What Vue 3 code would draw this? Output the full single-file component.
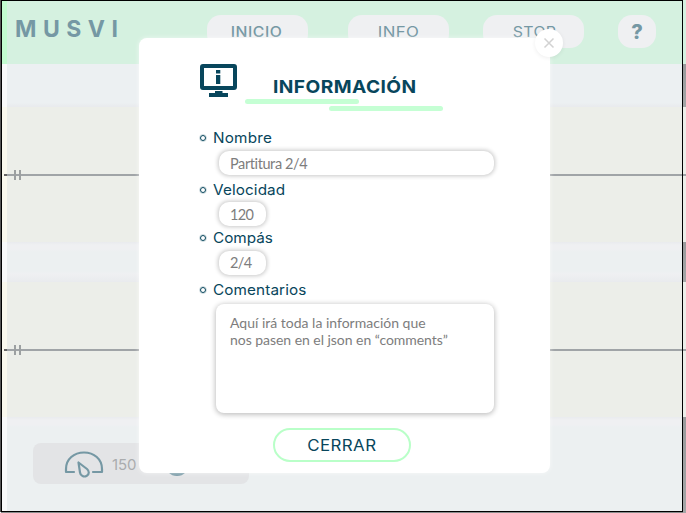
<script setup>
const nav = [
  { label: 'INICIO', cls: 'inicio' },
  { label: 'INFO', cls: 'info' },
  { label: 'STOP', cls: 'stop' },
]
const fields = [
  { label: 'Nombre', value: 'Partitura 2/4', cls: 'nombre' },
  { label: 'Velocidad', value: '120', cls: 'velocidad' },
  { label: 'Compás', value: '2/4', cls: 'compas' },
]
</script>

<template>
  <div class="screen">
    <header class="header">
      <h1 class="logo">MUSVI</h1>
      <nav class="nav">
        <button v-for="n in nav" :key="n.label" :class="['pill', n.cls]"><span>{{ n.label }}</span></button>
        <button class="pill help"><span>?</span></button>
      </nav>
    </header>
    <main class="score">
      <div class="gap first"></div>
      <section class="staff"><div class="line"></div><div class="bars"><i></i><i></i></div></section>
      <div class="gap middle"></div>
      <section class="staff"><div class="line"></div><div class="bars"><i></i><i></i></div></section>
    </main>
    <footer class="footer">
      <div class="tools">
        <svg class="gauge" width="42" height="30" viewBox="0 0 42 30" fill="none" stroke="#7598a4" stroke-width="2.2" stroke-linecap="round" stroke-linejoin="round">
          <path d="M11 23H3V20C3 10 11 3.5 21 3.5S39 10 39 20V23H30" />
          <path d="M15.5 13.5L17 23.5C17.5 27 21 28.4 23.8 26.8C26.6 25 26.2 22 24 20Z" />
        </svg>
        <span class="tempo">150</span>
        <span class="dot"></span>
      </div>
    </footer>
    <div class="edge left"><i class="e-head"></i><i class="e-gap1"></i><i class="e-staff"></i><i class="e-gap2"></i><i class="e-staff"></i></div>
    <div class="edge right"><i class="e-head"></i><i class="e-gap1"></i><i class="e-staff"></i><i class="e-gap2"></i><i class="e-staff"></i><i class="e-rest"></i></div>
    <div class="frame"></div>

    <div class="modal">
      <button class="close" aria-label="Cerrar">
        <svg width="12" height="12" viewBox="0 0 12 12" stroke="#d2d2d2" stroke-width="1.5"><path d="M1.5 1.5L10.5 10.5M10.5 1.5L1.5 10.5" /></svg>
      </button>
      <div class="title">
        <svg class="monitor" width="37" height="34" viewBox="0 0 37 34" fill="#08465c">
          <path fill-rule="evenodd" d="M3 0H34Q37 0 37 3V23Q37 26 34 26H3Q0 26 0 23V3Q0 0 3 0ZM4 4V22H33V4Z" />
          <path d="M16 6h4.3v3.4H16zM16 11h4.3v9H16zM15 27h7.5v2H28v4H9v-4h6z" />
        </svg>
        <div class="heading">
          <h2><span>INFORMACIÓN</span></h2>
          <div class="rule one"></div>
          <div class="rule two"></div>
        </div>
      </div>
      <div class="form">
        <div v-for="f in fields" :key="f.label" :class="['field', f.cls]">
          <div class="label"><i></i><span>{{ f.label }}</span></div>
          <div class="input"><span>{{ f.value }}</span></div>
        </div>
        <div class="field comentarios">
          <div class="label"><i></i><span>Comentarios</span></div>
          <div class="area"><p class="l1">Aquí irá toda la información que</p><p class="l2">nos pasen en el json en “comments”</p></div>
        </div>
      </div>
      <button class="cerrar"><span>CERRAR</span></button>
    </div>
  </div>
</template>

<style>
body { margin: 0; overflow: hidden; }
</style>

<style scoped>
* { box-sizing: border-box; }
h1, h2, p { margin: 0; }
button { border: 0; padding: 0; background: none; font: inherit; color: inherit; }
span { white-space: nowrap; }
.screen { position: relative; width: 686px; height: 513px; overflow: hidden; background: #ecf0f1; font-family: Inter, "Liberation Sans", sans-serif; color: #08465c; }
.header { height: 64px; background: #d5f1e0; display: flex; align-items: flex-start; padding: 15px 30px 0 15px; color: #7598a4; }
.logo { width: 192px; padding-top: 1px; font-size: 23px; line-height: 26px; font-weight: 700; letter-spacing: 6.5px; }
.nav { display: flex; }
.pill { width: 101px; height: 33px; border-radius: 14px; background: #eff0f2; font-size: 15px; line-height: 34px; text-align: center; }
.pill span, h2 span, .label span, .cerrar span { display: inline-block; }
.inicio { margin-right: 40px; letter-spacing: .5px; font-weight: 500; padding-right: 2px; }
.inicio span { transform: scaleX(1.05); }
.info { margin-right: 34px; letter-spacing: .3px; }
.info span { transform: scaleX(1.12); }
.stop { margin-right: 34px; letter-spacing: .3px; padding-left: 2px; }
.stop span { transform: scaleX(1.06); }
.help { width: 38px; margin-left: 0; font-size: 20px; font-weight: 800; }
.gap.first { height: 43px; background: linear-gradient(#ecf0f2 39px, #e9ebee 42px); }
.gap.middle { height: 40px; background: linear-gradient(#e9ebee, #eff0f2 3px, #eff0f2 7px, #ecf0f1 10px, #ecf0f1 29px, #eff0f2 32px, #e9ebee); }
.staff { height: 135px; background: #eceee9; display: flex; align-items: center; }
.line { width: 682px; height: 2px; margin-left: 4px; flex-shrink: 0; background: #a0a4a7; }
.bars { display: flex; gap: 3px; margin-left: -672px; }
.bars i { width: 2px; height: 10px; background: #9ca0a1; }
.footer { height: 96px; padding: 26px 0 0 33px; background: linear-gradient(#e9ebee, #eff0f2 3px, #eff0f2 8px, #ecf0f1 10px); }
.tools { width: 216px; height: 41px; border-radius: 8px; background: #e3e4e6; display: flex; align-items: flex-start; }
.gauge { margin: 6px 0 0 30px; }
.tempo { width: 32px; margin: 12px 0 0 7px; font-size: 15px; line-height: 20px; color: #aaacae; letter-spacing: -.1px; }
.dot { width: 24px; height: 24px; margin: 9px 0 0 -10px; transform: translateX(31px); border-radius: 50%; background: #7598a4; }
.edge { position: absolute; top: 0; height: 513px; display: flex; flex-direction: column; }
.edge i { flex-shrink: 0; }
.left { left: 0; width: 7px; background: #f9fafa; }
.right { left: 683px; width: 3px; background: #aaa; }
.e-head { height: 64px; background: #c2fccf; }
.right .e-head { background: #d5f1e0; }
.e-gap1 { height: 43px; }
.e-gap2 { height: 40px; }
.e-staff { height: 135px; }
.left .e-staff { background: linear-gradient(transparent 67px, #666 67px, #666 69px, transparent 69px) 4px 0 no-repeat #faf9ee; }
.right .e-staff { background: linear-gradient(#eceee9 67px, #a0a4a7 67px, #a0a4a7 69px, #eceee9 69px); }
.right .e-gap1, .right .e-gap2, .e-rest { background: linear-gradient(#999b9c, #a4a6a7); }
.e-rest { height: 96px; }
.frame { position: absolute; left: 1px; top: 0; width: 682px; height: 512px; border: 1px solid #000; box-shadow: -1px 0 0 #555, 0 1px 0 #8b8d8d; }
.modal { position: absolute; left: 139px; top: 38px; width: 411px; height: 435px; border-radius: 8px; background: #fff; box-shadow: 0 0 5px rgba(255,255,255,.6); padding: 26px 0 0 61px; }
.close { position: absolute; left: 396px; top: -9px; width: 28px; height: 28px; border-radius: 50%; background: #fff; display: flex; align-items: center; justify-content: center; box-shadow: 0 1px 4px rgba(0,0,0,.07); }
.title { display: flex; height: 64px; }
.monitor { flex-shrink: 0; }
.heading { width: 198px; margin-left: 8px; padding-top: 11px; }
h2 { height: 24px; padding-left: 28px; font-size: 18px; line-height: 24px; font-weight: 700; letter-spacing: .4px; }
h2 span { transform: scaleX(1.065); transform-origin: left; }
.rule { width: 114px; height: 5px; border-radius: 3px; background: #c5ffd4; }
.two { margin: 2px 0 0 84px; }
.field { display: flex; flex-direction: column; }
.nombre { height: 52px; }
.velocidad { height: 48px; }
.compas { height: 52px; }
.label { display: flex; align-items: center; height: 20px; font-size: 14.5px; line-height: 20px; }
.label span { transform: scaleX(1.055); transform-origin: left; }
.label i { width: 6px; height: 6px; border: 1.8px solid #08465c; border-radius: 50%; margin-right: 7px; outline: .5px solid rgba(8,70,92,.2); }
.input { width: 47px; height: 24px; margin: 3px 0 0 19px; padding-left: 11px; border-radius: 10px; background: #fff; box-shadow: 0 0 4px 1px rgba(0,0,0,.22); font: 14.5px/25px Lato, sans-serif; color: #7d7d7d; }
.nombre .input { width: 275px; letter-spacing: -.4px; }
.velocidad .input { margin-top: 2px; letter-spacing: -.7px; }
.compas .input { letter-spacing: -.6px; line-height: 24px; }
.nombre .label { letter-spacing: .2px; }
.velocidad .label { letter-spacing: .1px; }
.compas .label { letter-spacing: 0; }
.comentarios .label { letter-spacing: .1px; }
.area { width: 278px; height: 109px; margin: 4px 0 0 16px; padding: 10px 0 0 14px; border-radius: 8px; background: #fff; box-shadow: 0 1px 5px 1px rgba(0,0,0,.24); font: 14px/17px Lato, sans-serif; color: #7d7d7d; }
.area p { white-space: nowrap; }
.l1 { letter-spacing: 0; }
.l2 { letter-spacing: -.04px; }
.cerrar { display: block; width: 138px; height: 34px; margin: 15px 0 0 73px; border: 2px solid #b9ffc8; border-radius: 17px; font-size: 15.5px; line-height: 32px; letter-spacing: .4px; }
.cerrar span { transform: scaleX(1.09); }
</style>
